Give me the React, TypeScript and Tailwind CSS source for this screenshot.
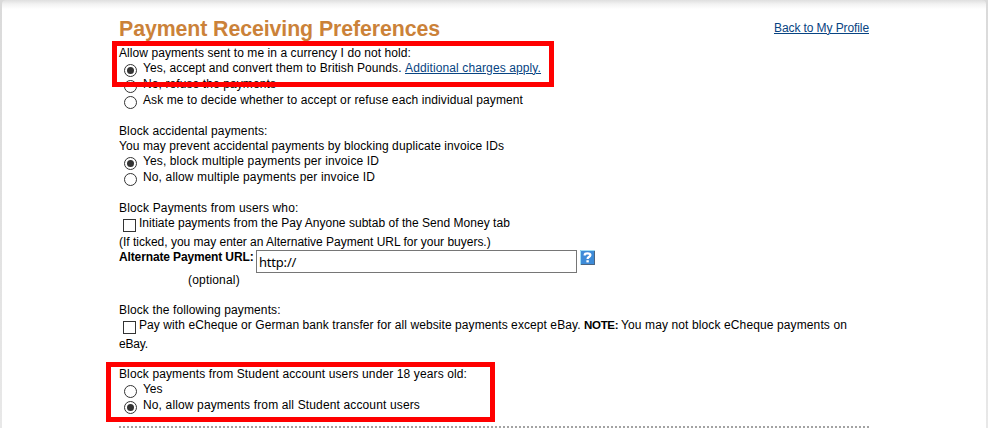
import type { ReactNode } from "react";

function Radio({ checked = false }: { checked?: boolean }) {
  return (
    <span className="mt-[3px] mr-[6px] ml-[5px] flex size-[13px] shrink-0 items-center justify-center rounded-full border border-[#333] bg-white">
      {checked && <span className="size-[7px] rounded-full bg-[#333]" />}
    </span>
  );
}

function Checkbox() {
  return <span className="mt-[3px] mr-[3px] ml-1 size-[13px] shrink-0 border border-[#333] bg-white" />;
}

function Option({ checked, children }: { checked?: boolean; children: ReactNode }) {
  return (
    <div className="flex h-4">
      <Radio checked={checked} />
      {children}
    </div>
  );
}

const link = "text-[#084482] underline decoration-1 underline-offset-1";

function HelpIcon() {
  return (
    <svg className="ml-[3px] size-[15px]" viewBox="0 0 15 15">
      <rect width="15" height="15" fill="#3d8bd8" />
      <path d="M.5 15V.5H15" fill="none" stroke="#9edcf5" />
      <path d="M14.5 1v13.5H1" fill="none" stroke="#4d6580" />
      <path d="M4.8 5.6V4.6Q4.8 3.3 7.5 3.3Q10.4 3.3 10.4 5.1Q10.4 6.4 8.7 7.1Q7.6 7.6 7.6 9" fill="none" stroke="#fff" strokeWidth="2.3" />
      <rect x="6.4" y="10.2" width="2.4" height="2.2" fill="#fff" />
    </svg>
  );
}

export default function App() {
  return (
    <div className="h-[428px] w-[988px] overflow-hidden bg-[linear-gradient(#dadada,#e8e8e8)] px-[2px] font-['Liberation_Sans',Arial,sans-serif] text-[12px] leading-[15px] whitespace-pre text-black">
      <div className="relative h-full rounded-t-[4px] bg-white bg-[linear-gradient(#dfdfdf,#f2f2f2_4px,#fff_9px)] bg-no-repeat pt-[15px] pl-[117px]">
        <div className="flex h-[31px] w-[750px] justify-between">
          <h1 className="mt-px text-[21.33px] leading-[27px] font-bold tracking-[-0.09px] text-[#cb8239]">Payment Receiving Preferences</h1>
          <a className={`mt-[6px] tracking-[-0.094px] ${link}`}>Back to My Profile</a>
        </div>

        <div className="h-[15px] tracking-[0.071px]">Allow payments sent to me in a currency I do not hold:</div>
        <Option checked>
          <span className="tracking-[0.076px]">Yes, accept and convert them to British Pounds. </span>
          <a className={`tracking-[0.112px] ${link}`}>Additional charges apply.</a>
        </Option>
        <Option><span className="tracking-[0.099px]">No, refuse the payments</span></Option>
        <Option><span className="tracking-[0.105px]">Ask me to decide whether to accept or refuse each individual payment</span></Option>

        <div className="mt-[15px] h-[15px] tracking-[0.118px]">Block accidental payments:</div>
        <div className="h-[15px] tracking-[0.085px]">You may prevent accidental payments by blocking duplicate invoice IDs</div>
        <Option checked><span className="tracking-[0.116px]">Yes, block multiple payments per invoice ID</span></Option>
        <Option><span className="tracking-[0.141px]">No, allow multiple payments per invoice ID</span></Option>

        <div className="mt-[15px] h-[15px] tracking-[0.16px]">Block Payments from users who:</div>
        <div className="flex h-[19px] tracking-[0.03px]"><Checkbox />Initiate payments from the Pay Anyone subtab of the Send Money tab</div>
        <div className="h-[15px] tracking-[-0.01px]">(If ticked, you may enter an Alternative Payment URL for your buyers.)</div>
        <div className="flex h-[23px]">
          <b className="w-[137px] tracking-[-0.13px]">Alternate Payment URL:</b>
          <span className="h-[23px] w-[321px] border border-[#767676] bg-white pl-[2px] font-['Noto_Sans','Open_Sans',sans-serif] text-[13px] leading-[23px] tracking-[-0.2px]">http://</span>
          <HelpIcon />
        </div>
        <div className="h-[15px] pl-[69px] tracking-[0.18px]">(optional)</div>

        <div className="mt-[15px] h-[15px] tracking-[0.125px]">Block the following payments:</div>
        <div className="flex h-[19px]">
          <Checkbox />
          <span className="tracking-[0.08px]">Pay with eCheque or German bank transfer for all website payments except eBay. </span>
          <b className="w-[37px] text-[11.5px] tracking-[-0.3px]">NOTE: </b>
          <span className="tracking-[0.116px]">You may not block eCheque payments on</span>
        </div>
        <div className="h-[15px] tracking-[-0.159px]">eBay.</div>

        <div className="mt-[15px] h-[15px] tracking-[0.118px]">Block payments from Student account users under 18 years old:</div>
        <Option><span className="tracking-[-0.1px]">Yes</span></Option>
        <Option checked><span className="tracking-[0.14px]">No, allow payments from all Student account users</span></Option>
        <div className="mt-3 h-[2px] w-[750px] bg-[repeating-linear-gradient(90deg,#a3a3a3_0_2px,#fff_2px_4px)]" />

        <div className="absolute top-[41px] left-[110px] h-[46px] w-[442px] border-[5px] border-[#f00]" />
        <div className="absolute top-[362px] left-[104px] h-[60px] w-[389px] border-[5px] border-[#f00]" />
      </div>
    </div>
  );
}
